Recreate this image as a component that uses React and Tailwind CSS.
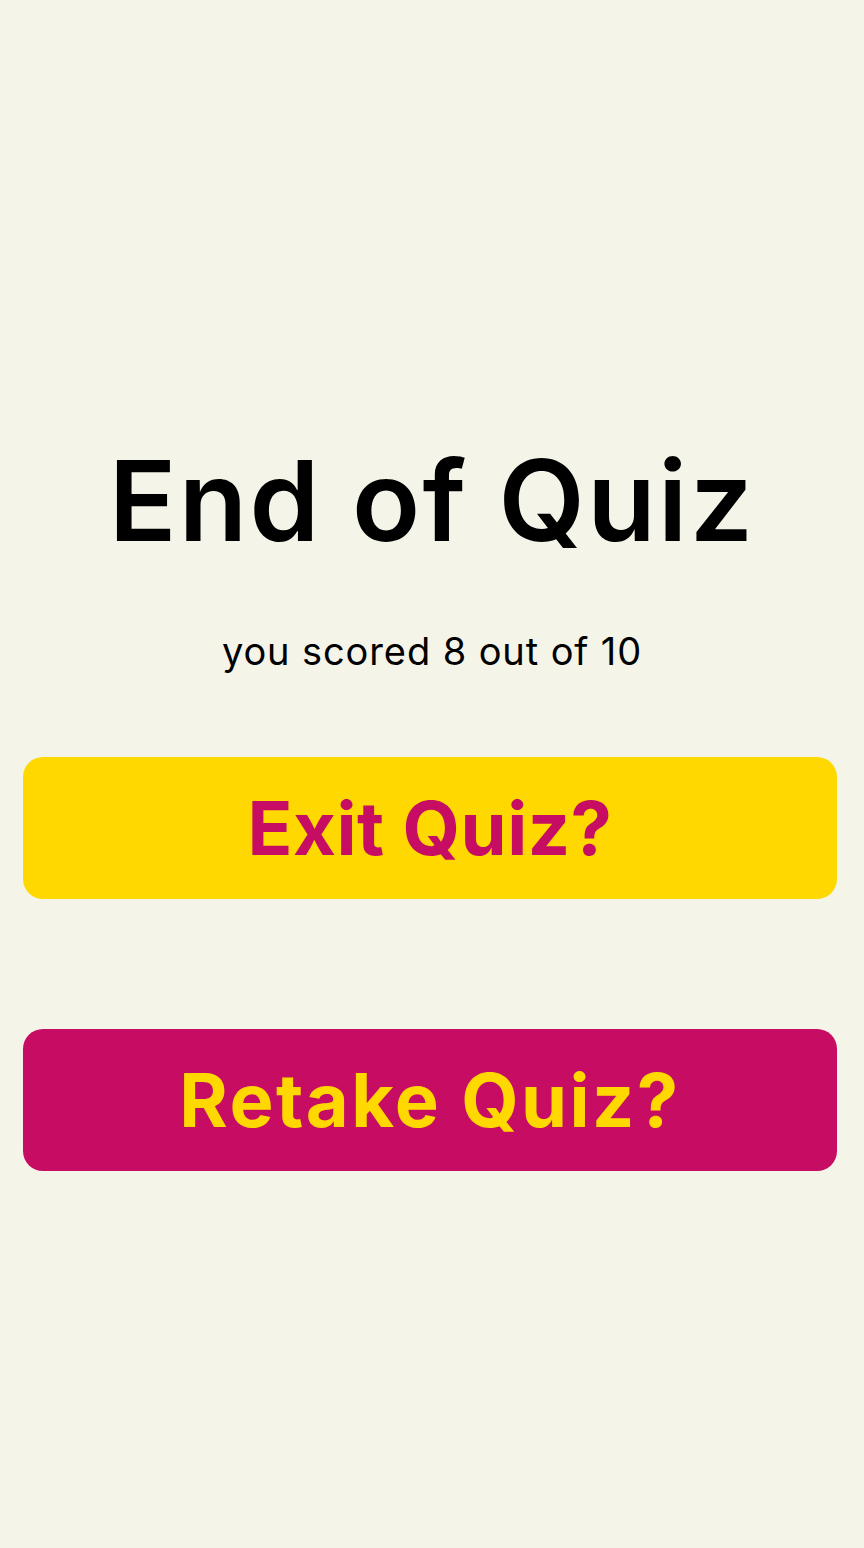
export default function App() {
  return (
    <div className="min-h-[1548px] w-full bg-[#f4f4e9] flex flex-col" style={{ fontFamily: 'Inter, "Noto Sans", sans-serif' }}>
      <div className="h-[444px]" />
      <h1 className="text-center text-black font-semibold text-[112px] leading-[112px] tracking-[2.2px]">End of Quiz</h1>
      <p className="mt-[76px] text-center text-black font-normal text-[38px] leading-[38px] tracking-[0.9px]">you scored 8 out of 10</p>
      <div className="mt-[87px] ml-[23px] w-[814px] h-[142px] rounded-[20px] bg-[#ffd800] flex items-center justify-center">
        <span className="text-[#c60c63] font-bold text-[74px] leading-none tracking-[0.5px]">Exit Quiz?</span>
      </div>
      <div className="mt-[130px] ml-[23px] w-[814px] h-[142px] rounded-[20px] bg-[#c60c63] flex items-center justify-center">
        <span className="text-[#ffd800] font-bold text-[74px] leading-none tracking-[2.4px]">Retake Quiz?</span>
      </div>
    </div>
  );
}
